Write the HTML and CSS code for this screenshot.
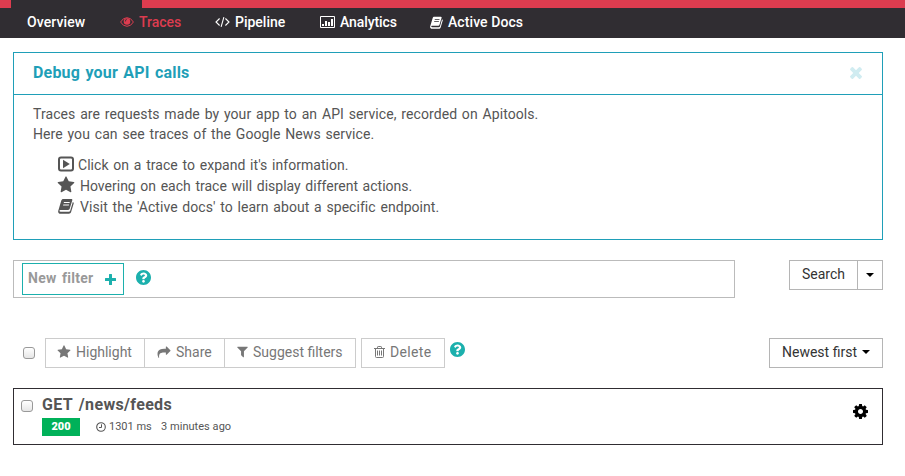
FILE: index.html
```html
<!DOCTYPE html>
<html lang="en">
<head>
<meta charset="utf-8">
<title>Traces</title>
<link rel="stylesheet" href="styles.css">
</head>
<body>
<svg class="defs" width="0" height="0">
  <symbol id="star" viewBox="0 0 1792 1792"><path d="M1728 647q0 22-26 48l-363 354 86 500q1 7 1 20 0 21-10.500 35.500t-30.500 14.500q-19 0-40-12l-449-236-449 236q-22 12-40 12-21 0-31.500-14.500t-10.500-35.500q0-6 2-20l86-500-364-354q-25-27-25-48 0-37 56-46l502-73 225-455q19-41 49-41t49 41l225 455 502 73q56 9 56 46z"/></symbol>
  <symbol id="book" viewBox="0 0 16 16"><path fill-rule="evenodd" d="M5.300.9h8c.8 0 1.200.6 1 1.300l-2.600 8.600c-.2.700-.8 1.100-1.500 1.100H2.300c-.7 0-1 .6-.8 1.100.2.600.8.800 1.400.8h7.900c.7 0 1.200-.3 1.400-1l2.600-8.800c.8.300 1.100.9.900 1.600l-2.600 8.500c-.3 1-1.200 1.700-2.200 1.700H2.500C1 15.800-.2 14.300.2 12.900L3.300 2.500C3.600 1.500 4.300.9 5.300.9zM6 4l-.3 1h5.800l.3-1zM5.300 6.400l-.3 1h5.800l.3-1z"/></symbol>
  <symbol id="help" viewBox="8 8 496 496"><path d="M504 256c0 136.997-111.043 248-248 248S8 392.997 8 256C8 119.083 119.043 8 256 8s248 111.083 248 248zM262.655 90c-54.497 0-89.255 22.957-116.549 63.758-3.536 5.286-2.353 12.415 2.715 16.258l34.699 26.310c5.205 3.947 12.621 3.008 16.665-2.122 17.864-22.658 30.113-35.797 57.303-35.797 20.429 0 45.698 13.148 45.698 32.958 0 14.976-12.363 22.667-32.534 33.976C247.128 238.528 216 254.941 216 296v4c0 6.627 5.373 12 12 12h56c6.627 0 12-5.373 12-12v-1.333c0-28.462 83.186-29.647 83.186-106.667 0-58.002-60.165-102-116.531-102zM256 338c-25.365 0-46 20.635-46 46 0 25.364 20.635 46 46 46s46-20.636 46-46c0-25.365-20.635-46-46-46z"/></symbol>
</svg>

<header class="top">
  <div class="strip"><div class="tab"></div></div>
  <nav class="nav">
    <a class="nav-item overview"><span class="label">Overview</span></a>
    <a class="nav-item traces active"><svg class="icon" viewBox="0 0 14 12"><path fill="none" stroke="currentColor" stroke-width="1" d="M.6 6Q3 1.700 7 1.700T13.400 6Q11 10.300 7 10.300T.6 6z"/><path fill-rule="evenodd" d="M7 2.200a3.300 3.300 0 1 1 0 6.600 3.300 3.300 0 0 1 0-6.600zM4.800 5.500h.8q0-1.400 1.400-1.400V3.300Q4.800 3.300 4.800 5.500z"/></svg><span class="label">Traces</span></a>
    <a class="nav-item pipeline"><svg class="icon" viewBox="0 0 15 12"><path fill="none" stroke="currentColor" stroke-width="1.100" d="M4.600 2.500L1 6l3.600 3.500M10.400 2.500L14 6l-3.600 3.500M8.900 1.200L6.100 10.800"/></svg><span class="label">Pipeline</span></a>
    <a class="nav-item analytics"><svg class="icon" viewBox="0 0 15 12"><path fill="none" stroke="currentColor" d="M.5.500h14v11H.5z"/><path d="M2 8h2v2H2zM5 5h2v5H5zM8 6h2v4H8zM11 3h2v7h-2z"/></svg><span class="label">Analytics</span></a>
    <a class="nav-item docs"><svg class="icon"><use href="#book"/></svg><span class="label">Active Docs</span></a>
  </nav>
</header>

<main class="page">
  <section class="panel">
    <div class="panel-head">
      <h2 class="panel-title">Debug your API calls</h2>
      <svg class="close" viewBox="300 344 1192 1192"><path d="M1490 1322q0 40-28 68l-136 136q-28 28-68 28t-68-28l-294-294-294 294q-28 28-68 28t-68-28l-136-136q-28-28-28-68t28-68l294-294-294-294q-28-28-28-68t28-68l136-136q28-28 68-28t68 28l294 294 294-294q28-28 68-28t68 28l136 136q28 28 28 68t-28 68l-294 294 294 294q28 28 28 68z" transform="translate(0 -20)"/></svg>
    </div>
    <div class="panel-body">
      <p class="line intro-a">Traces are requests made by your app to an API service, recorded on Apitools.</p>
      <p class="line intro-b">Here you can see traces of the Google News service.</p>
      <ul class="tips">
        <li class="tip tip-a"><svg class="tip-icon" viewBox="0 0 16 16"><path fill="none" stroke="currentColor" stroke-width="2" d="M3 1.500h10q2 0 2 2v9q0 2-2 2H3q-2 0-2-2v-9q0-2 2-2z"/><path d="M5 3.800L11.800 8 5 12.200z"/></svg><span>Click on a trace to expand it's information.</span></li>
        <li class="tip tip-b"><svg class="tip-icon star-big"><use href="#star"/></svg><span>Hovering on each trace will display different actions.</span></li>
        <li class="tip tip-c"><svg class="tip-icon"><use href="#book"/></svg><span>Visit the 'Active docs' to learn about a specific endpoint.</span></li>
      </ul>
    </div>
  </section>

  <div class="search-row">
    <div class="filter-box">
      <div class="new-filter"><span>New filter</span><svg class="plus" viewBox="0 0 11 11"><path d="M4.500 0h2q.5 0 .5.500V4h3.500q.5 0 .5.500v2q0 .5-.5.500H7v3.500q0 .5-.5.500h-2q-.5 0-.5-.5V7H.5Q0 7 0 6.500v-2Q0 4 .5 4H4V.5Q4 0 4.500 0z"/></svg></div>
      <svg class="help"><use href="#help"/></svg>
    </div>
    <div class="search-group">
      <button class="btn search">Search</button>
      <button class="btn more"><i class="caret"></i></button>
    </div>
  </div>

  <div class="toolbar">
    <span class="check"></span>
    <div class="group">
      <button class="btn muted highlight"><svg class="ticon"><use href="#star"/></svg><span>Highlight</span></button>
      <button class="btn muted share"><svg class="ticon" viewBox="0 0 1792 1792"><path d="M1792 640q0 26-19 45l-512 512q-19 19-45 19t-45-19-19-45v-256h-224q-98 0-175.500 6t-154 21.500-133 42.500-105.500 69.500-80 101-48.500 138.500-17.500 181q0 55 5 123 0 6 2.500 23.500t2.500 26.500q0 15-8.500 25t-23.500 10q-16 0-28-17-7-9-13-22t-13.500-30-10.500-24q-127-285-127-451 0-199 53-333 162-403 875-403h224v-256q0-26 19-45t45-19 45 19l512 512q19 19 19 45z"/></svg><span>Share</span></button>
      <button class="btn muted suggest"><svg class="ticon" viewBox="192 160 1408 1600"><path d="M1595 295q17 41-14 70l-493 493v742q0 42-39 59-13 5-25 5-27 0-45-19l-256-256q-19-19-19-45v-486l-493-493q-31-29-14-70 17-39 59-39h1280q42 0 59 39z"/></svg><span>Suggest filters</span></button>
    </div>
    <button class="btn muted delete"><svg class="ticon" viewBox="0 0 11 12"><path fill="none" stroke="currentColor" d="M0 2.500h11M1.500 2.500v8q0 1 1 1h6q1 0 1-1v-8M3.500 2.500V1.200q0-.7.700-.7h2.600q.7 0 .7.700v1.300M3.500 4.500v5M5.500 4.500v5M7.500 4.500v5"/></svg><span>Delete</span></button>
    <svg class="help"><use href="#help"/></svg>
    <button class="btn sort"><span>Newest first</span><i class="caret"></i></button>
  </div>

  <article class="trace">
    <span class="check"></span>
    <div class="trace-main">
      <h3 class="trace-title">GET /news/feeds</h3>
      <div class="meta">
        <span class="status">200</span>
        <svg class="clock" viewBox="0 0 10 10"><circle cx="5" cy="5" r="4.300" fill="none" stroke="currentColor" stroke-width="1.100"/><path fill="none" stroke="currentColor" d="M5.500 2.300v3.200H3"/></svg>
        <span class="duration">1301 ms</span>
        <span class="ago">3 minutes ago</span>
      </div>
    </div>
    <svg class="cog" viewBox="128 128 1536 1536"><path d="M1152 896q0-106-75-181t-181-75-181 75-75 181 75 181 181 75 181-75 75-181zm512-109v222q0 12-8 23t-20 13l-185 28q-19 54-39 91 35 50 107 138 10 12 10 25t-9 23q-27 37-99 108t-94 71q-12 0-26-9l-138-108q-44 23-91 38-16 136-29 186-7 28-36 28h-222q-14 0-24.500-8.500t-11.500-21.500l-28-184q-49-16-90-37l-141 107q-10 9-25 9-14 0-25-11-126-114-165-168-7-10-7-23 0-12 8-23 15-21 51-66.500t54-70.500q-27-50-41-99l-183-27q-13-2-21-12.500t-8-23.500v-222q0-12 8-23t19-13l186-28q14-46 39-92-40-57-107-138-10-12-10-24 0-10 9-23 26-36 98.500-107.500t94.500-71.500q13 0 26 10l138 107q44-23 91-38 16-136 29-186 7-28 36-28h222q14 0 24.500 8.500t11.500 21.500l28 184q49 16 90 37l142-107q9-9 24-9 13 0 25 10 129 119 165 170 7 8 7 22 0 12-8 23-15 21-51 66.500t-54 70.500q26 50 41 98l183 28q13 2 21 12.500t8 23.500z"/></svg>
  </article>
</main>
</body>
</html>
```
FILE: styles.css
```css
* { box-sizing: border-box; }
body {
  margin: 0;
  background: #fff;
  color: #555;
  font: 14px/20px Roboto, "Liberation Sans", sans-serif;
  white-space: nowrap;
}
svg { display: block; fill: currentColor; flex: none; }
.defs { position: absolute; }
h2, h3, p, ul { margin: 0; padding: 0; }

.strip { height: 8px; background: #dd3c4f; padding-left: 11px; }
.tab { width: 131px; height: 8px; background: #302d32; }
.nav { display: flex; height: 30px; padding-left: 27px; background: #302d32; color: #fff; }
.nav-item { display: flex; align-items: center; height: 28px; font-weight: 500; }
.nav-item .icon { width: 15px; height: 12px; margin-right: 5px; }
.nav-item.docs { letter-spacing: .08px; }
.docs .icon { width: 13px; height: 13px; }
.overview { width: 93px; letter-spacing: .1px; }
.traces { width: 95px; }
.nav-item.traces .icon { width: 14px; }
.pipeline { width: 105px; }
.analytics { width: 110px; letter-spacing: -.1px; }
.active { color: #dd3c4f; }

.page { width: 870px; margin: 14px 0 0 13px; }
.panel { height: 188px; border: 1px solid #1f9fb8; }
.panel-head {
  display: flex; align-items: center; justify-content: space-between;
  height: 42px; padding: 0 20px 1px 19px; border-bottom: 1px solid #1f9fb8;
}
.panel-title { color: #1f9fb8; font-size: 16px; font-weight: 700; line-height: 20px; letter-spacing: .17px; word-spacing: 1.300px; }
.close { width: 12px; height: 12px; color: #d0ecf1; }
.panel-body { padding: 9px 19px; }
.intro-a { letter-spacing: .08px; word-spacing: 1.200px; }
.intro-b { letter-spacing: .08px; word-spacing: 1.200px; }
.tips { list-style: none; margin-top: 10px; padding-left: 25px; }
.tip { display: flex; align-items: center; height: 21px; }
.tip-a { letter-spacing: .04px; word-spacing: 1.200px; }
.tip-b { word-spacing: 1.150px; }
.tip-c { letter-spacing: .05px; word-spacing: 1.200px; }
.tip-icon { width: 16px; height: 16px; margin: -2px 6px 0 0; }
.tip-a .tip-icon { margin-right: 4px; }
.tip .star-big { width: 18px; height: 18px; margin: -2px 5px 0 -1px; }

.search-row { display: flex; justify-content: space-between; margin-top: 20px; }
.filter-box { display: flex; align-items: flex-start; width: 722px; height: 38px; padding: 2px 0 0 8px; border: 1px solid #bbb; }
.new-filter {
  display: flex; align-items: center; justify-content: space-between;
  width: 102px; height: 32px; padding: 0 7px 2px 5px; margin-right: 12px;
  border: 1px solid #1cb0ad; color: #999; font-weight: 700;
  letter-spacing: .3px; word-spacing: 1.500px;
}
.plus { width: 11px; height: 11px; margin-top: 2px; color: #1cb0ad; }
.help { width: 15px; height: 15px; color: #1cb0ad; }
.filter-box .help { margin-top: 7px; }
.search-group { display: flex; }
.btn {
  display: flex; align-items: center; justify-content: center;
  height: 30px; margin: 0; padding: 0 0 2px; border: 1px solid #b5b5b5;
  background: #fff; color: #333; font: inherit;
}
.search { width: 69px; }
.more { width: 26px; margin-left: -1px; padding: 0; }
.caret { border: 4px solid transparent; border-top-color: #000; border-bottom: 0; }

.toolbar { display: flex; margin-top: 40px; }
.check {
  width: 12px; height: 12px; border: 1px solid #999; border-radius: 3px;
  background: linear-gradient(#fff, #e6e6e6); flex: none;
}
.toolbar .check { margin: 9px 10px 0 10px; }
.group { display: flex; margin-right: 5px; }
.group .btn + .btn { margin-left: -1px; }
.muted { border-color: #ccc; color: #777; justify-content: flex-start; padding-left: 12px; }
.ticon { width: 13px; height: 13px; margin-right: 5px; }
.highlight { width: 100px; }
.highlight .ticon { width: 14px; height: 14px; margin-right: 5px; margin-left: -1px; }
.share { width: 81px; }
.share .ticon { width: 14px; margin-right: 5px; }
.suggest { width: 132px; }
.suggest .ticon { width: 11px; height: 12px; }
.delete { width: 84px; margin-right: 5px; letter-spacing: .35px; }
.delete .ticon { width: 11px; height: 12px; }
.toolbar .help { margin-top: 3.500px; }
.sort { width: 114px; margin-left: auto; }
.sort .caret { margin-left: 5px; }

.trace { display: flex; height: 57px; margin-top: 20px; padding-left: 7px; border: 1px solid #302d32; }
.trace .check { margin: 11px 9px 0 0; }
.trace-title { padding-top: 6px; font-size: 16px; line-height: 20px; color: #555; letter-spacing: .33px; word-spacing: 2px; }
.meta { display: flex; align-items: center; height: 18px; margin-top: 3px; font-size: 11px; }
.status { width: 38px; background: #00b159; color: #fff; font-weight: 900; line-height: 18px; text-align: center; }
.clock { width: 10px; height: 10px; margin: 0 3px 0 16px; }
.duration { width: 52px; }
.ago { letter-spacing: .04px; }
.cog { width: 15px; height: 15px; margin: 15px 14px 0 auto; color: #000; }
```
